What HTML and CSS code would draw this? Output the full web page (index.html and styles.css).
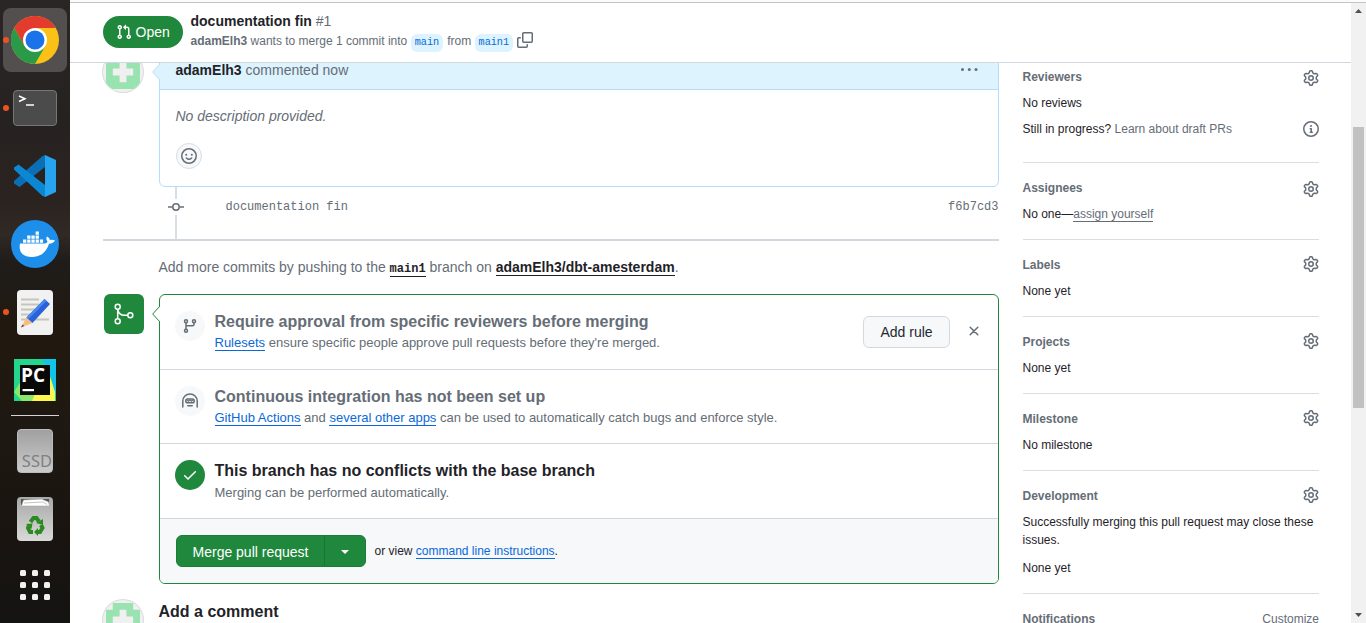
FILE: index.html
```
<!DOCTYPE html>
<html lang="en">
<head>
<meta charset="utf-8">
<title>documentation fin · Pull Request #1</title>
<link rel="stylesheet" href="styles.css">
</head>
<body>
<svg class="defs" width="0" height="0">
  <clipPath id="round"><circle cx="21" cy="21" r="20"/></clipPath>
  <symbol id="gear" viewBox="0 0 16 16"><path d="M8 0a8.2 8.2 0 0 1 .701.031C9.444.095 9.99.645 10.16 1.29l.288 1.107c.018.066.079.158.212.224.231.114.454.243.668.386.123.082.233.09.299.071l1.103-.303c.644-.176 1.392.021 1.82.63.27.385.506.792.704 1.218.315.675.111 1.422-.364 1.891l-.814.806c-.049.048-.098.147-.088.294.016.257.016.515 0 .772-.01.147.038.246.088.294l.814.806c.475.469.679 1.216.364 1.891a7.977 7.977 0 0 1-.704 1.217c-.428.61-1.176.807-1.82.63l-1.102-.302c-.067-.019-.177-.011-.3.071a5.909 5.909 0 0 1-.668.386c-.133.066-.194.158-.211.224l-.29 1.106c-.168.646-.715 1.196-1.458 1.26a8.006 8.006 0 0 1-1.402 0c-.743-.064-1.289-.614-1.458-1.26l-.289-1.106c-.018-.066-.079-.158-.212-.224a5.738 5.738 0 0 1-.668-.386c-.123-.082-.233-.09-.299-.071l-1.103.303c-.644.176-1.392-.021-1.82-.63a8.12 8.12 0 0 1-.704-1.218c-.315-.675-.111-1.422.363-1.891l.815-.806c.05-.048.098-.147.088-.294a6.214 6.214 0 0 1 0-.772c.01-.147-.038-.246-.088-.294l-.815-.806C.635 6.045.431 5.298.746 4.623a7.92 7.92 0 0 1 .704-1.217c.428-.61 1.176-.807 1.82-.63l1.102.302c.067.019.177.011.3-.071.214-.143.437-.272.668-.386.133-.066.194-.158.211-.224l.29-1.106C6.009.645 6.556.095 7.299.03 7.53.01 7.764 0 8 0Zm-.571 1.525c-.036.003-.108.036-.137.146l-.289 1.105c-.147.561-.549.967-.998 1.189-.173.086-.34.183-.5.29-.417.278-.97.423-1.529.27l-1.103-.303c-.109-.03-.175.016-.195.045-.22.312-.412.644-.573.99-.014.031-.021.11.059.19l.815.806c.411.406.562.957.53 1.456a4.709 4.709 0 0 0 0 .582c.032.499-.119 1.05-.53 1.456l-.815.806c-.081.08-.073.159-.059.19.162.346.353.677.573.989.02.03.085.076.195.046l1.102-.303c.56-.153 1.113-.008 1.53.27.161.107.328.204.501.29.447.222.85.629.997 1.189l.289 1.105c.029.109.101.143.137.146a6.6 6.6 0 0 0 1.142 0c.036-.003.108-.036.137-.146l.289-1.105c.147-.561.549-.967.998-1.189.173-.086.34-.183.5-.29.417-.278.97-.423 1.529-.27l1.103.303c.109.029.175-.016.195-.045.22-.313.411-.644.573-.99.014-.031.021-.11-.059-.19l-.815-.806c-.411-.406-.562-.957-.53-1.456a4.709 4.709 0 0 0 0-.582c-.032-.499.119-1.05.53-1.456l.815-.806c.081-.08.073-.159.059-.19a6.464 6.464 0 0 0-.573-.989c-.02-.03-.085-.076-.195-.046l-1.102.303c-.56.153-1.113.008-1.53-.27a4.44 4.44 0 0 0-.501-.29c-.447-.222-.85-.629-.997-1.189l-.289-1.105c-.029-.11-.101-.143-.137-.146a6.6 6.6 0 0 0-1.142 0ZM11 8a3 3 0 1 1-6 0 3 3 0 0 1 6 0ZM9.5 8a1.5 1.5 0 1 0-3.001.001A1.5 1.5 0 0 0 9.5 8Z"/></symbol>
  <symbol id="identicon" viewBox="0 0 42 42">
    <circle cx="21" cy="21" r="21" fill="#d9dbde"/>
    <g clip-path="url(#round)">
      <path fill="#f0f0f0" d="M0 0h42v42H0Z"/>
      <path fill="#98e3b0" d="M10.800 4h20.400v6.800H38V38H4V10.800h6.800Z"/>
      <path fill="#f0f0f0" d="M17.600 10.800h6.800v6.800h6.800v6.800h-6.800v6.800h-6.800v-6.800h-6.800v-6.800h6.800Z"/>
    </g>
  </symbol>
</svg>
<nav class="dock">
  <div class="app active"><i class="run"></i>
    <svg width="48" height="48" viewBox="0 0 48 48">
      <circle cx="24" cy="24" r="24" fill="#fbc116"/>
      <path fill="#e33b2e" d="M3.200 12A24 24 0 0 1 44.800 12H24L13.600 30Z"/>
      <path fill="#2b9a48" d="M3.200 12A24 24 0 0 0 24 48L34.400 30 24 24 13.600 30Z"/>
      <circle cx="24" cy="24" r="12" fill="#fff"/><circle cx="24" cy="24" r="9.500" fill="#1a73e8"/>
    </svg></div>
  <div class="app"><i class="run"></i>
    <svg width="44" height="36" viewBox="0 0 44 36">
      <rect x=".5" y=".5" width="43" height="35" rx="3.500" fill="#4b4b4b" stroke="#777"/>
      <path d="M6 6l6 2.700L6 11.500M13 15h8" fill="none" stroke="#fff" stroke-width="1.500"/>
    </svg></div>
  <div class="app">
    <svg width="42" height="42" viewBox="0 0 42 42">
      <path fill="#0a6fb5" d="M31 0v12L5.500 32 0 28.500v-2.500L28 1.500Z"/>
      <path fill="#0b87d4" d="M0 14.500V12.500l4.500-3L31 30v12l-3-1.500Z"/>
      <path fill="#26a4f0" d="M31 0l11 5v32l-11 5Z"/>
    </svg></div>
  <div class="app">
    <svg width="48" height="48" viewBox="0 0 48 48">
      <circle cx="24" cy="24" r="24" fill="#1d8fea"/>
      <path fill="#fff" d="M9 23.500h25q2.500-.3 2.500-2-2-3-.5-5 2.500 1 3 3.500 3-.5 5 .5-1.500 3-6 3.200C35 33.500 28 37 21 37 11 37 7.500 31 9 23.500Z"/>
      <path fill="#fff" d="M12 19.500h3.300v3.300H12zM16.200 19.500h3.300v3.300h-3.300zM20.400 19.500h3.300v3.300h-3.300zM24.600 19.500h3.300v3.300h-3.300zM28.800 19.500h3.300v3.300h-3.300zM16.200 15.500h3.300v3.300h-3.300zM20.400 15.500h3.300v3.300h-3.300zM24.600 15.500h3.300v3.300h-3.300zM24.600 11.500h3.300v3.300h-3.300z"/>
    </svg></div>
  <div class="app"><i class="run"></i>
    <svg width="36" height="45" viewBox="0 0 36 45">
      <rect width="36" height="45" rx="4" fill="#f1f1f1"/>
      <path stroke="#c7c4b8" stroke-width="1.800" d="M4 9.500h18M4 14.500h18M4 19.500h14M4 24.500h14M4 29.500h28"/>
      <path fill="#f5bd83" d="M4 37.500l5.500-10 6 5.500Z"/><path fill="#444" d="M4 37.500l1.500-3 1.700 1.500Z"/>
      <path fill="#2863d8" d="M9.500 27.500L27.500 9l5.500 5-17.500 19Z"/><path fill="#4a86ef" d="M9.500 27.500L27.500 9l2 2-18 18Z"/>
    </svg></div>
  <div class="app">
    <svg width="42" height="42" viewBox="0 0 42 42">
      <path fill="#22d68c" d="M0 0h42v42H0Z"/><path fill="#11c5e8" d="M27 0h15v37L32 6Z"/>
      <path fill="#fcf650" d="M15 42l6-30 12-4 8 25v9Z"/><path fill="#89e86b" d="M0 33L17 6h16L18 42H8Z"/>
      <path fill="#080808" d="M6 6h30v30H6Z"/><path fill="#fff" d="M8.500 30h11.500v2.200H8.500Z"/>
      <text class="pc-mark" x="7" y="23">PC</text>
    </svg></div>
  <div class="dock-line"></div>
  <div class="app"><div class="disk">SSD</div></div>
  <div class="app">
    <svg width="36" height="44" viewBox="0 0 36 44">
      <defs><linearGradient id="bin" x2="0" y2="1"><stop stop-color="#a8a8a8"/><stop offset="1" stop-color="#d9d9d9"/></linearGradient></defs>
      <rect width="36" height="44" rx="4" fill="url(#bin)"/>
      <path fill="#555" d="M4 2h28v6H4Z"/><path fill="#fff" stroke="#aaa" stroke-width=".6" d="M4.500 9l2-6 18-1 7 3 1 4Z"/><path d="M7 6l19-1 4 2.500" stroke="#999" stroke-width=".6" fill="none"/>
      <g fill="none" stroke="#2c8a22" stroke-width="4"><path d="M13.500 25l3-4h3l2.500 3.500"/><path d="M24 28l1.500 3-2.500 4h-2.500"/><path d="M16 35h-3l-2-4 1-2.500"/></g>
      <path fill="#2c8a22" d="M19 26l7-4v6ZM21 31v8l-4-4ZM9 27l6.500-.5-1 5.500Z"/>
    </svg></div>
  <div class="app last">
    <svg width="30" height="30" viewBox="0 0 30 30" fill="#f2f1ef">
      <rect width="6" height="6" rx="1.500"/><rect x="12" width="6" height="6" rx="1.500"/><rect x="24" width="6" height="6" rx="1.500"/>
      <rect y="12" width="6" height="6" rx="1.500"/><rect x="12" y="12" width="6" height="6" rx="1.500"/><rect x="24" y="12" width="6" height="6" rx="1.500"/>
      <rect y="24" width="6" height="6" rx="1.500"/><rect x="12" y="24" width="6" height="6" rx="1.500"/><rect x="24" y="24" width="6" height="6" rx="1.500"/>
    </svg></div>
</nav>
<div class="window">
  <div class="toolbar-edge"></div>
  <div class="viewport">
    <div class="page">
      <header class="sticky">
        <span class="state"><svg width="16" height="16" viewBox="0 0 16 16" fill="#fff"><path d="M1.500 3.250a2.250 2.250 0 1 1 3 2.122v5.256a2.251 2.251 0 1 1-1.500 0V5.372A2.250 2.250 0 0 1 1.500 3.250Zm5.677-.177L9.573.677A.25.25 0 0 1 10 .854V2.500h1A2.500 2.500 0 0 1 13.500 5v5.628a2.251 2.251 0 1 1-1.500 0V5a1 1 0 0 0-1-1h-1v1.646a.25.25 0 0 1-.427.177L7.177 3.427a.25.25 0 0 1 0-.354ZM3.750 2.500a.75.75 0 1 0 0 1.500.75.75 0 0 0 0-1.500Zm0 9.500a.75.75 0 1 0 0 1.500.75.75 0 0 0 0-1.500Zm8.250.75a.75.75 0 1 0 1.500 0 .75.75 0 0 0-1.500 0Z"/></svg>Open</span>
        <div class="heading">
          <div class="title"><b>documentation fin</b> <span>#1</span></div>
          <div class="meta"><span><b>adamElh3</b> wants to merge 1 commit into</span><code>main</code><span>from</span><code>main1</code>
            <svg class="copy" width="16" height="16" viewBox="0 0 16 16"><path d="M0 6.750C0 5.784.784 5 1.750 5h1.500a.75.75 0 0 1 0 1.500h-1.500a.25.25 0 0 0-.25.25v7.500c0 .138.112.25.25.25h7.500a.25.25 0 0 0 .25-.25v-1.500a.75.75 0 0 1 1.500 0v1.500A1.750 1.750 0 0 1 9.250 16h-7.500A1.750 1.750 0 0 1 0 14.250Z"/><path d="M5 1.750C5 .784 5.784 0 6.750 0h7.500C15.216 0 16 .784 16 1.750v7.500A1.750 1.750 0 0 1 14.250 11h-7.500A1.750 1.750 0 0 1 5 9.250Zm1.750-.25a.25.25 0 0 0-.25.25v7.500c0 .138.112.25.25.25h7.500a.25.25 0 0 0 .25-.25v-7.500a.25.25 0 0 0-.25-.25Z"/></svg>
          </div>
        </div>
      </header>
      <div class="content">
        <main class="thread">
          <div class="row comment-row">
            <svg class="avatar" width="42" height="42"><use href="#identicon"/></svg>
            <section class="comment">
              <svg class="caret" width="8" height="16" viewBox="0 0 8 16"><path d="M8 0L.7 8 8 16" fill="#ddf4ff" stroke="#b6dcfb"/></svg>
              <div class="comment-head"><span><b>adamElh3</b> commented now</span>
                <svg width="17" height="16" viewBox="0 0 17 16"><circle cx="1.500" cy="7.500" r="1.500"/><circle cx="8.300" cy="7.500" r="1.500"/><circle cx="15" cy="7.500" r="1.500"/></svg></div>
              <div class="comment-body"><em>No description provided.</em>
                <span class="react"><svg width="16" height="16" viewBox="0 0 16 16"><circle cx="8" cy="8" r="7.250" fill="none" stroke="#656d76" stroke-width="1.500"/><circle cx="5.200" cy="6.700" r="1"/><circle cx="10.800" cy="6.700" r="1"/><path d="M5.300 10q2.700 2.600 5.400 0" fill="none" stroke="#656d76" stroke-width="1.400" stroke-linecap="round"/></svg></span></div>
            </section>
          </div>
          <div class="commit">
            <div class="rail"><i></i><svg width="16" height="16" viewBox="0 0 16 16"><path d="M0 8h4.500M11.500 8H16" stroke="#656d76" stroke-width="1.500"/><circle cx="8" cy="8" r="3.200" fill="#fff" stroke="#656d76" stroke-width="1.500"/></svg><i class="grow"></i></div>
            <code>documentation fin</code><code class="sha">f6b7cd3</code>
          </div>
          <p class="push">Add more commits by pushing to the <code>main1</code> branch on <b>adamElh3/dbt-amesterdam</b>.</p>
          <div class="row merge-row">
            <span class="merge-mark"><svg width="24" height="24" viewBox="0 0 24 24" fill="none" stroke="#fff" stroke-width="1.500"><circle cx="5.700" cy="4.700" r="2.500"/><circle cx="5.700" cy="19.300" r="2.500"/><circle cx="18.300" cy="13.300" r="2.500"/><path d="M5.700 7.200v9.600M5.700 7.500c.8 3.600 3.400 5.800 6.800 5.800h3.300"/></svg></span>
            <section class="merge">
              <svg class="caret" width="8" height="16" viewBox="0 0 8 16"><path d="M8 0L.7 8 8 16" fill="#fff" stroke="#1f883d"/></svg>
              <div class="item first">
                <span class="badge"><svg width="16" height="16" viewBox="0 0 16 16" fill="none" stroke="#656d76" stroke-width="1.500"><circle cx="4" cy="3.200" r="1.500"/><circle cx="4" cy="12.800" r="1.500"/><circle cx="12" cy="3.200" r="1.500"/><path d="M4 5v6M12 5v1.200q0 1.500-1.500 1.500H4"/></svg></span>
                <div class="copytext"><h3>Require approval from specific reviewers before merging</h3><p><a>Rulesets</a> ensure specific people approve pull requests before they're merged.</p></div>
                <button class="add">Add rule</button>
                <svg class="close" width="16" height="16" viewBox="0 0 16 16"><path d="M4.200 4.200l7.600 7.600M11.800 4.200l-7.600 7.600" stroke="#656d76" stroke-width="1.500" stroke-linecap="round"/></svg>
              </div>
              <div class="item second">
                <span class="badge"><svg width="16" height="16" viewBox="0 0 16 16" fill="none" stroke="#656d76" stroke-width="1.500"><path d="M.8 14V8a7.200 7 0 0 1 14.400 0v6M5.800 12.800h4.400" stroke-linecap="round"/><rect x="3.800" y="6" width="8.400" height="3.800" rx="1.900"/><path d="M5 6.800l1.500 1.400L8 6.800l1.500 1.400L11 6.800" stroke-width="1.100"/></svg></span>
                <div class="copytext"><h3>Continuous integration has not been set up</h3><p><a>GitHub Actions</a> and <a>several other apps</a> can be used to automatically catch bugs and enforce style.</p></div>
              </div>
              <div class="item third">
                <span class="badge ok"><svg width="16" height="16" viewBox="0 0 16 16"><path d="M2.700 8.700l3.300 3.300 7.300-7.300" fill="none" stroke="#fff" stroke-width="1.500" stroke-linecap="round"/></svg></span>
                <div class="copytext"><h3 class="dark">This branch has no conflicts with the base branch</h3><p>Merging can be performed automatically.</p></div>
              </div>
              <div class="actions">
                <div class="split"><button class="go">Merge pull request</button><button class="more"><svg width="8" height="4" viewBox="0 0 8 4"><path fill="#fff" d="M0 0h8L4 4Z"/></svg></button></div>
                <span>or view <a>command line instructions</a>.</span>
              </div>
            </section>
          </div>
          <div class="row reply"><svg class="avatar" width="42" height="42"><use href="#identicon"/></svg><h3 class="dark">Add a comment</h3></div>
        </main>
        <aside class="side">
          <section class="reviewers"><h4>Reviewers<svg class="low"><use href="#gear"/></svg></h4><p>No reviews</p>
            <p class="draft"><span>Still in progress? <span class="muted">Learn about draft PRs</span></span><svg width="16" height="16" viewBox="0 0 16 16"><path d="M0 8a8 8 0 1 1 16 0A8 8 0 0 1 0 8Zm8-6.500a6.500 6.500 0 1 0 0 13 6.500 6.500 0 0 0 0-13ZM6.500 7.750A.75.75 0 0 1 7.250 7h1a.75.75 0 0 1 .75.75v2.750h.25a.75.75 0 0 1 0 1.500h-2a.75.75 0 0 1 0-1.500h.25v-2h-.25a.75.75 0 0 1-.75-.75ZM8 6a1 1 0 1 1 0-2 1 1 0 0 1 0 2Z"/></svg></p></section>
          <section><h4>Assignees<svg class="low"><use href="#gear"/></svg></h4><p>No one—<span class="self">assign yourself</span></p></section>
          <section><h4>Labels<svg><use href="#gear"/></svg></h4><p>None yet</p></section>
          <section><h4>Projects<svg><use href="#gear"/></svg></h4><p>None yet</p></section>
          <section><h4>Milestone<svg><use href="#gear"/></svg></h4><p>No milestone</p></section>
          <section><h4>Development<svg><use href="#gear"/></svg></h4><p>Successfully merging this pull request may close these issues.</p><p class="spaced">None yet</p></section>
          <section><h4>Notifications<span class="muted">Customize</span></h4></section>
        </aside>
      </div>
    </div>
    <div class="scrollbar">
      <svg width="7" height="4" viewBox="0 0 7 4"><path d="M0 4h7L3.500 0Z" fill="#505050"/></svg>
      <div class="thumb"></div>
      <svg width="7" height="4" viewBox="0 0 7 4"><path d="M0 0h7L3.500 4Z" fill="#505050"/></svg>
    </div>
  </div>
</div>
</body>
</html>
```

FILE: styles.css
```
* { box-sizing: border-box; }
body {
  margin: 0; display: flex; width: 1366px; height: 623px; overflow: hidden;
  font-family: "Liberation Sans", Arial, sans-serif; font-size: 14px; color: #1f2328; background: #fff;
}
h3, h4, p { margin: 0; }
svg { flex: none; display: block; }
.defs { position: absolute; }
code { font-family: "Liberation Mono", monospace; }
button { font: inherit; padding: 0; }

/* dock */
.dock {
  width: 70px; height: 623px; flex: none; padding-top: 8px; display: flex; flex-direction: column; align-items: center; gap: 4px;
  background: linear-gradient(#2a2625 0, #262221 120px, #2b2320 200px, #302924 235px, #1f1c1a 262px, #21190f 330px, #1e1813 440px, #1a1410 530px, #141412 623px);
}
.app { position: relative; width: 64px; height: 64px; flex: none; display: flex; align-items: center; justify-content: center; }
.app.active { background: #534f4e; border-radius: 8px; }
.app.last { margin-top: -2px; }
.run { position: absolute; left: 0; top: 29px; width: 6px; height: 6px; border-radius: 50%; background: #e95420; }
.dock-line { width: 48px; height: 1px; flex: none; background: #d5d3d1; margin-top: -1px; margin-bottom: -1px; }
.pc-mark { font: bold 19px "Open Sans", sans-serif; fill: #fff; }
.disk {
  width: 36px; height: 44px; border-radius: 4px; border: 1px solid #bcbcbc; background: linear-gradient(#a0a0a0, #cbcbcb);
  display: flex; align-items: flex-end; justify-content: flex-end; font: 16.500px/22px "Noto Sans", sans-serif; color: #808080;
}

/* window frame */
.window { flex: 1; display: flex; flex-direction: column; min-width: 0; }
.toolbar-edge { height: 3px; flex: none; background: #fbfbfb; border-bottom: 1px solid #c4c4c4; }
.viewport { flex: 1; display: flex; min-height: 0; }
.page { flex: 1; display: flex; flex-direction: column; min-width: 0; }
.scrollbar { width: 15px; flex: none; background: #f1f1f1; display: flex; flex-direction: column; align-items: center; padding: 6px 0 6px; }
.thumb { width: 11px; height: 281px; background: #c1c1c1; margin-top: 114px; margin-bottom: auto; }

/* sticky header */
.sticky { height: 60px; flex: none; border-bottom: 1px solid #d0d7de; padding: 8px 0 0 33px; display: flex; align-items: flex-start; gap: 7.500px; }
.state { width: 80px; height: 32px; margin-top: 5px; padding-left: 13px; display: flex; align-items: center; gap: 3.500px; background: #1f883d; color: #fff; border-radius: 16px; }
.title { line-height: 20px; }
.title span { color: #656d76; }
.meta { display: flex; align-items: center; height: 20px; font-size: 12px; color: #656d76; }
.meta code { height: 18px; margin: 3px 4px 0 3.400px; padding: 0 4px; background: #ddf4ff; color: #0969da; border-radius: 6px; font-size: 10.2px; line-height: 17px; }
.copy { fill: #656d76; margin: -2px 0 0 -.5px; }

/* conversation */
.content { flex: 1; min-height: 0; overflow: hidden; display: flex; padding-left: 33px; gap: 23.500px; align-items: flex-start; }
.thread { width: 896px; flex: none; }
.row { display: flex; }
.avatar { margin: 0 15px 0 -1px; }
.comment-row { margin-top: -12px; }
.comment { position: relative; width: 840px; height: 136px; border: 1px solid #b6dcfb; border-radius: 6px; }
.caret { position: absolute; left: -8px; top: 12px; }
.comment-head { height: 38px; padding: 0 20px 2px 15.500px; display: flex; align-items: center; justify-content: space-between; background: #ddf4ff; border-bottom: 1px solid #b6dcfb; border-radius: 5px 5px 0 0; color: #656d76; fill: #656d76; }
.comment-head b { color: #1f2328; }
.comment-body { padding: 16px; line-height: 21px; color: #656d76; }
.comment-body em { display: block; margin: 0 0 16px -.5px; }
.react { width: 26px; height: 26px; display: flex; align-items: center; justify-content: center; border: 1px solid #d8dee4; border-radius: 50%; background: #f6f8fa; fill: #656d76; }
.commit { height: 54px; padding-left: 65px; border-bottom: 2px solid #d0d7de; display: flex; align-items: flex-start; font-size: 12px; line-height: 16px; color: #656d76; }
.commit code { margin-top: 12px; }
.commit .sha { margin: 12px .5px 0 auto; }
.rail { width: 16px; height: 52px; margin-right: 41.500px; display: flex; flex-direction: column; align-items: center; }
.rail i { width: 2px; height: 12px; background: #d8dee4; }
.rail .grow { flex: 1; }
.push { margin: 16px 0 0 55.500px; height: 21px; line-height: 21px; color: #656d76; }
.push code, .push b { font-weight: bold; color: #1f2328; border-bottom: 1px solid #1f2328; }
.push code { font-size: 12px; }

/* merge panel */
.merge-row { margin-top: 16px; }
.merge-mark { width: 40px; height: 40px; margin: 0 15px 0 1px; display: flex; align-items: center; justify-content: center; border-radius: 6px; background: #1f883d; }
.merge { position: relative; width: 840px; border: 1px solid #1f883d; border-radius: 6px; }
.merge .caret { top: 11px; }
.item { height: 75px; padding: 16px 16px 0 15px; display: flex; align-items: flex-start; border-bottom: 1px solid #d0d7de; }
.second { height: 74px; }
.badge { width: 30px; height: 30px; margin-right: 9.500px; flex: none; display: flex; align-items: center; justify-content: center; border-radius: 50%; background: #f6f8fa; }
.ok { background: #1f883d; }
.copytext { flex: 1; padding-top: 1px; }
h3 { font-size: 16px; line-height: 20px; color: #656d76; }
.dark { color: #1f2328; }
.copytext p { font-size: 13px; line-height: 20px; margin-top: 1px; color: #656d76; }
.third .copytext p { margin-top: 2px; }
a { color: #0969da; border-bottom: 1px solid #0969da; }
.add { width: 87px; height: 32px; margin-top: 5px; color: #24292f; background: #f6f8fa; border: 1px solid #d5d9dd; border-radius: 6px; }
.close { margin: 12px 0 0 16px; }
.actions { height: 64px; padding: 16px; display: flex; gap: 8.500px; background: #f6f8fa; border-radius: 0 0 5px 5px; font-size: 12px; line-height: 32px; }
.split { display: flex; width: 190px; height: 32px; border: 1px solid #1c7d38; border-radius: 6px; background: #1f883d; font-size: 14px; }
.split button { border: 0; background: none; color: #fff; }
.split .go { width: 147px; padding-bottom: 2px; }
.split .more { flex: 1; border-left: 1px solid #197435; display: flex; align-items: center; justify-content: center; padding-top: 1px; }
.reply { margin-top: 15px; }
.reply h3 { margin: 3px 0 0 -.5px; }

/* sidebar */
.side { width: 296.500px; font-size: 12px; line-height: 18px; }
.side section { border-bottom: 1px solid #d8dee4; padding: 16px 0; }
.side .reviewers { padding: 5px 0 24px; }
h4 { font-size: 12px; color: #656d76; display: flex; justify-content: space-between; margin-bottom: 8px; }
h4 svg { width: 16px; height: 16px; fill: #656d76; }
h4 .low { margin: 2px 0 -2px; }
.draft { margin-top: 8px; display: flex; justify-content: space-between; fill: #656d76; }
.draft svg { margin-top: 1px; }
.muted { color: #656d76; font-weight: normal; }
.self { color: #656d76; border-bottom: 1px solid #656d76; }
.spaced { margin-top: 10px; }
```
